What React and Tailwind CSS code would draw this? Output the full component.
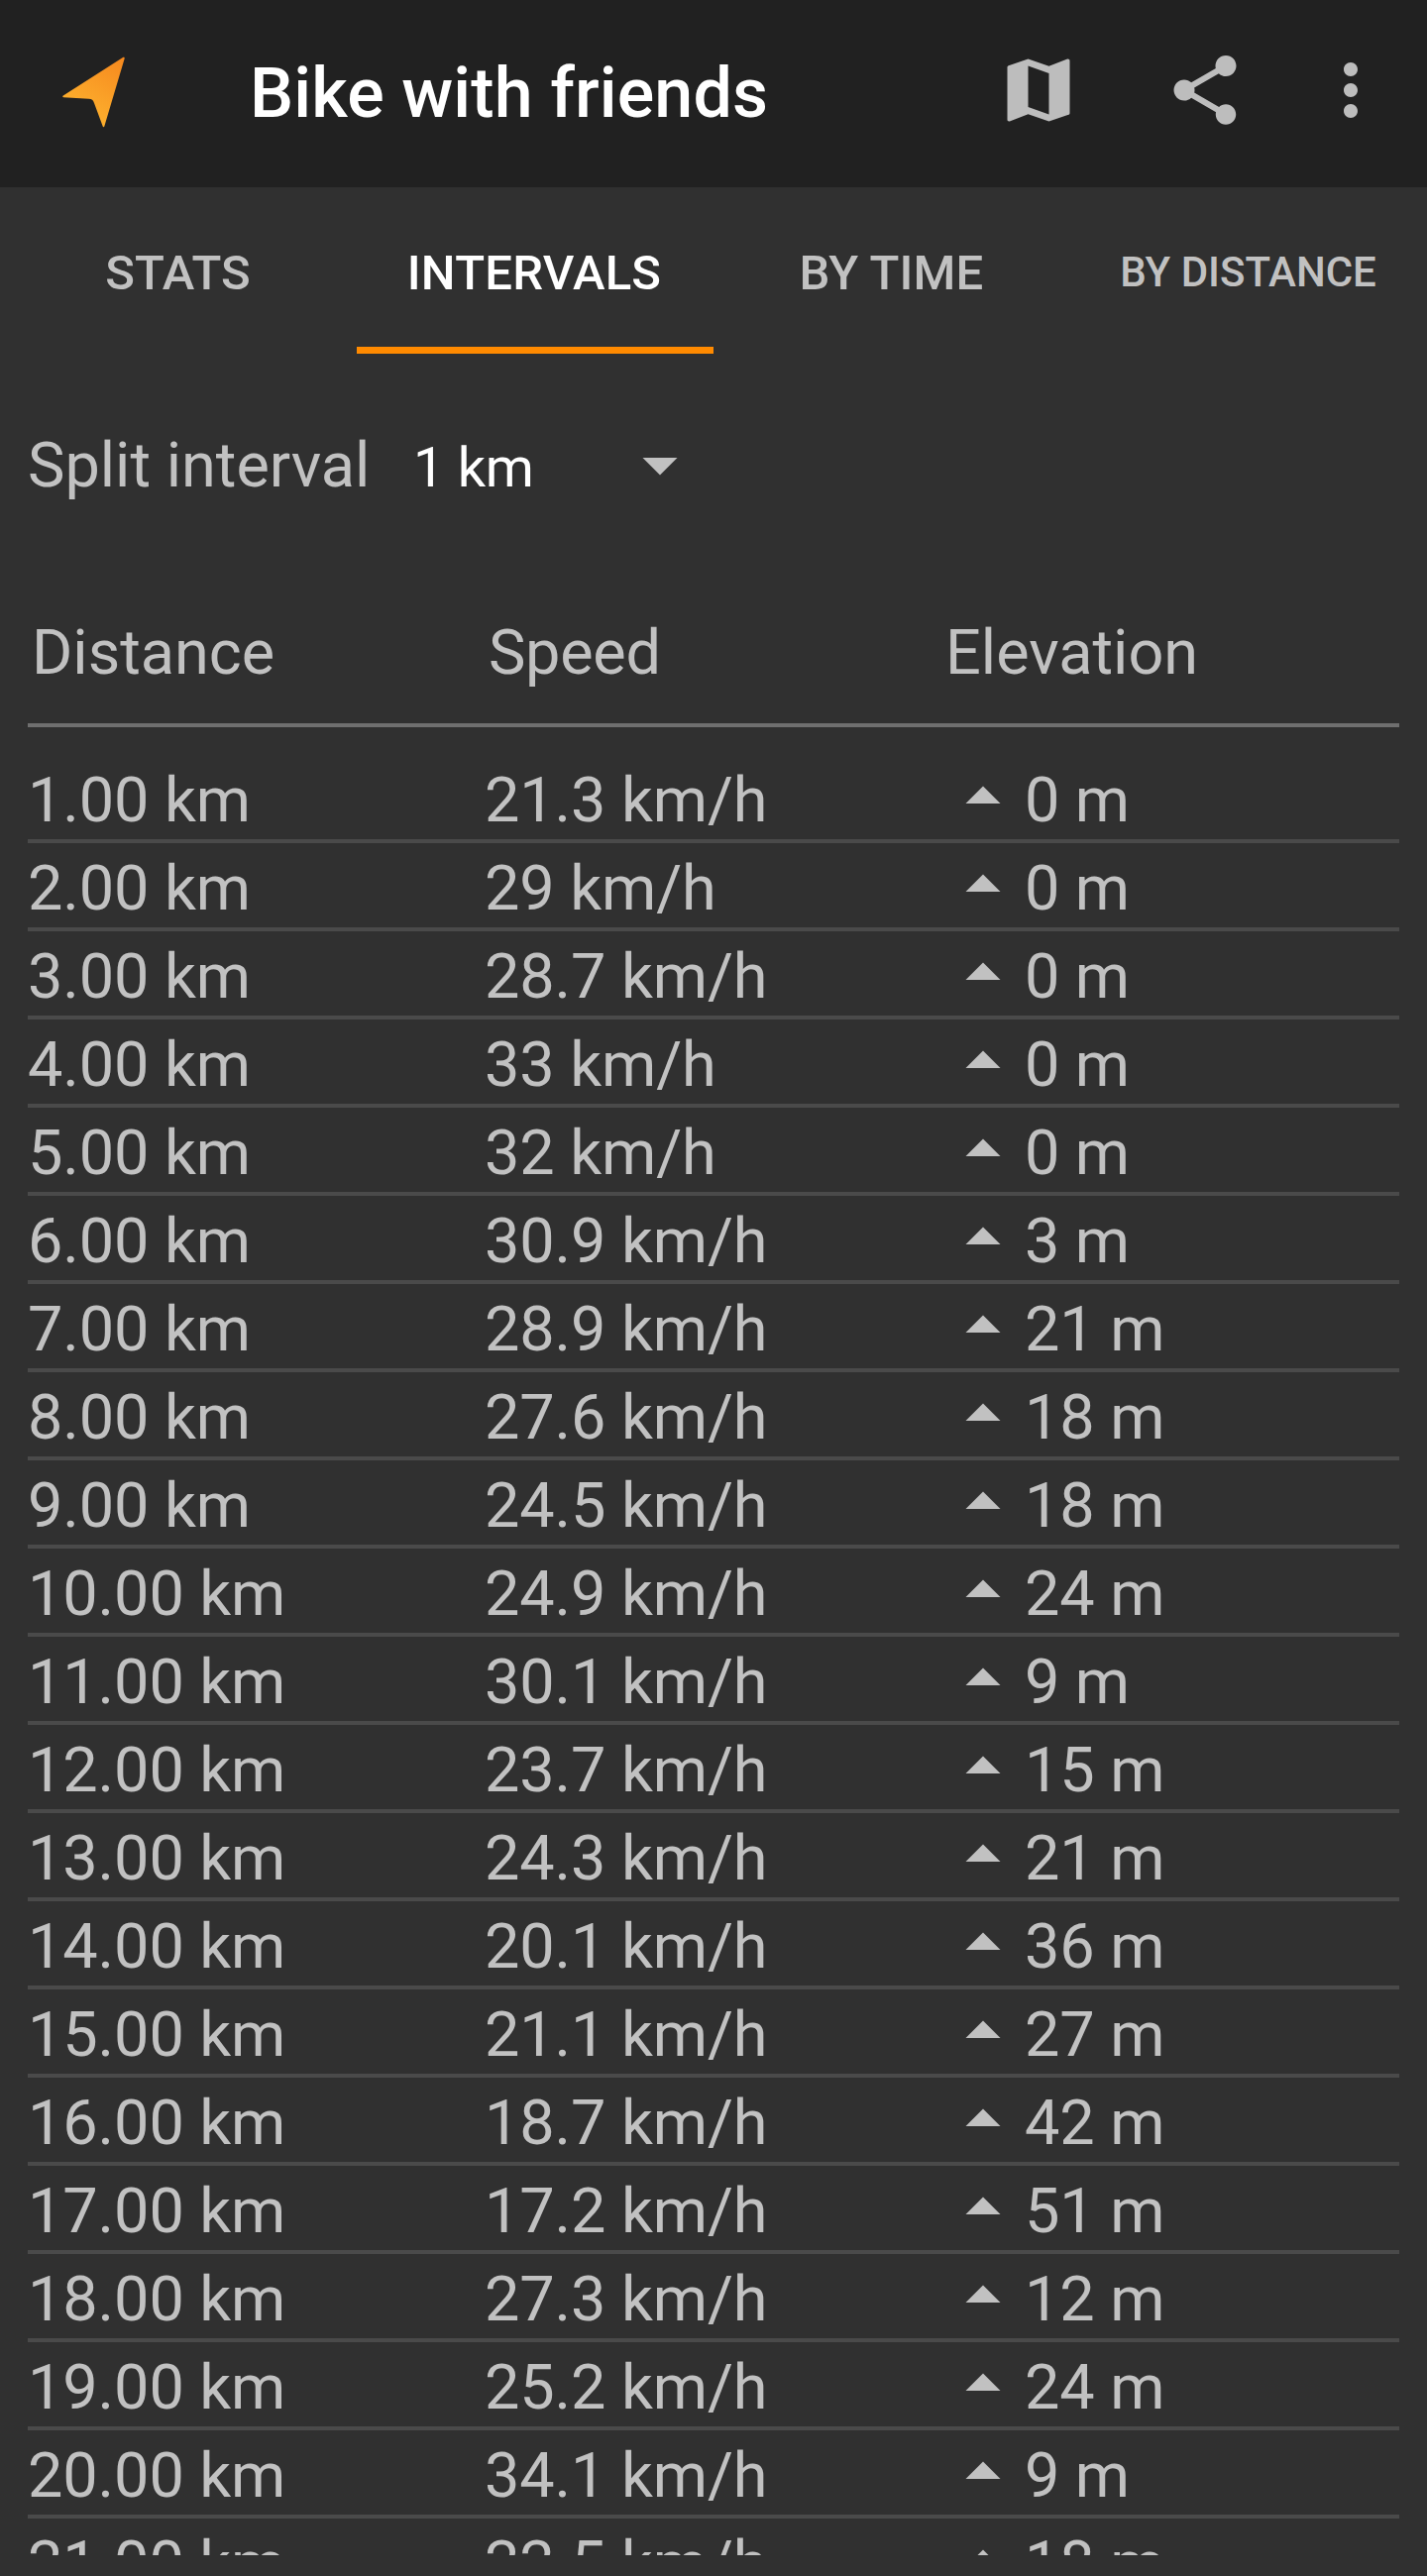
import { MdArrowDropDown, MdArrowDropUp, MdMap, MdMoreVert, MdShare } from "react-icons/md";

const intervals = [
  ["1.00", "21.3", "0"],
  ["2.00", "29", "0"],
  ["3.00", "28.7", "0"],
  ["4.00", "33", "0"],
  ["5.00", "32", "0"],
  ["6.00", "30.9", "3"],
  ["7.00", "28.9", "21"],
  ["8.00", "27.6", "18"],
  ["9.00", "24.5", "18"],
  ["10.00", "24.9", "24"],
  ["11.00", "30.1", "9"],
  ["12.00", "23.7", "15"],
  ["13.00", "24.3", "21"],
  ["14.00", "20.1", "36"],
  ["15.00", "21.1", "27"],
  ["16.00", "18.7", "42"],
  ["17.00", "17.2", "51"],
  ["18.00", "27.3", "12"],
  ["19.00", "25.2", "24"],
  ["20.00", "34.1", "9"],
  ["21.00", "22.5", "18"],
];

function Logo() {
  return (
    <svg className="mt-[56px] ml-[62px] h-[74px] w-[66px] shrink-0" viewBox="62 56 66 74">
      <defs>
        <linearGradient id="arrow" gradientUnits="userSpaceOnUse" x1="122" y1="60" x2="88" y2="118">
          <stop offset="0" stopColor="#f68a1f" />
          <stop offset="1" stopColor="#fdaf2d" />
        </linearGradient>
      </defs>
      <path
        fill="url(#arrow)"
        d="M124 57.9 C125 57.3 126 57.9 125.7 59.1 L105.4 127.2 C105.1 128.5 104 128.5 103.6 127.3 L95 103.9 C94 101.2 92.6 100 89.6 99.8 L64.2 98.2 C63.1 98.1 62.9 97.2 63.8 96.6 Z"
      />
    </svg>
  );
}

function Header() {
  return (
    <header className="flex h-[189px] items-start bg-[#212121] text-[#bdbdbd]">
      <Logo />
      <h1 className="mt-[53px] ml-[124px] flex-1 text-[70px] leading-[82px] font-medium tracking-[0.1px] whitespace-nowrap text-white">
        Bike with friends
      </h1>
      <div className="mt-[49px] mr-[35px] flex">
        <MdMap className="mr-[84px] size-[84px]" />
        <MdShare className="mr-[63px] size-[84px]" />
        <MdMoreVert className="size-[84px]" />
      </div>
    </header>
  );
}

function Tabs() {
  const tab = "flex items-center justify-center text-[49px] leading-[57px] pt-[5px] pr-[1px] tracking-[0.15px]";
  return (
    <nav className="grid h-[168px] grid-cols-4 font-medium whitespace-nowrap">
      <div className={tab}>STATS</div>
      <div className="flex items-center justify-center border-b-[7px] border-[#ff8a00] pt-[12px] pr-[2px] text-[49px] leading-[57px] tracking-[0.25px] text-white">
        INTERVALS
      </div>
      <div className={tab}>BY TIME</div>
      <div className="flex items-center justify-center pt-[3px] pr-[1px] text-[42px] leading-[49px]">BY DISTANCE</div>
    </nav>
  );
}

export default function App() {
  return (
    <div className="flex h-[2600px] w-[1440px] flex-col overflow-hidden bg-[#303030] font-['Roboto',sans-serif] text-[#c1c1c1]">
      <Header />
      <Tabs />
      <section className="mt-[70px] ml-[28px] flex h-[84px] items-start whitespace-nowrap">
        <div className="mt-[6px] w-[389px] text-[63px] leading-[73px]">Split interval</div>
        <div className="mt-[12px] w-[207px] text-[56px] leading-[66px] tracking-[-0.3px] text-white">1 km</div>
        <MdArrowDropDown className="size-[84px]" />
      </section>
      <section className="mx-[28px] mt-[111px] text-[63px] whitespace-nowrap">
        <div className="grid h-[112px] grid-cols-[461px_461px_1fr] border-b-4 border-[#6f6f6f] leading-[73px]">
          <div className="pl-[4px]">Distance</div>
          <div className="pl-[4px] tracking-[-0.3px]">Speed</div>
          <div className="pl-[4px]">Elevation</div>
        </div>
        <div className="mt-[28px] h-[1817px] overflow-hidden">
          {intervals.map(([distance, speed, elevation]) => (
            <div key={distance} className="grid h-[89px] grid-cols-[461px_461px_1fr] border-b-4 border-[#4a4a4a] leading-[79px]">
              <div className="pt-[6px] tracking-[-0.1px]">{distance} km</div>
              <div className="pt-[6px] tracking-[-0.1px]">{speed} km/h</div>
              <div className="flex">
                <MdArrowDropUp className="size-[84px] shrink-0" />
                <span className="pt-[6px] tracking-[-0.1px]">{elevation} m</span>
              </div>
            </div>
          ))}
        </div>
      </section>
    </div>
  );
}
